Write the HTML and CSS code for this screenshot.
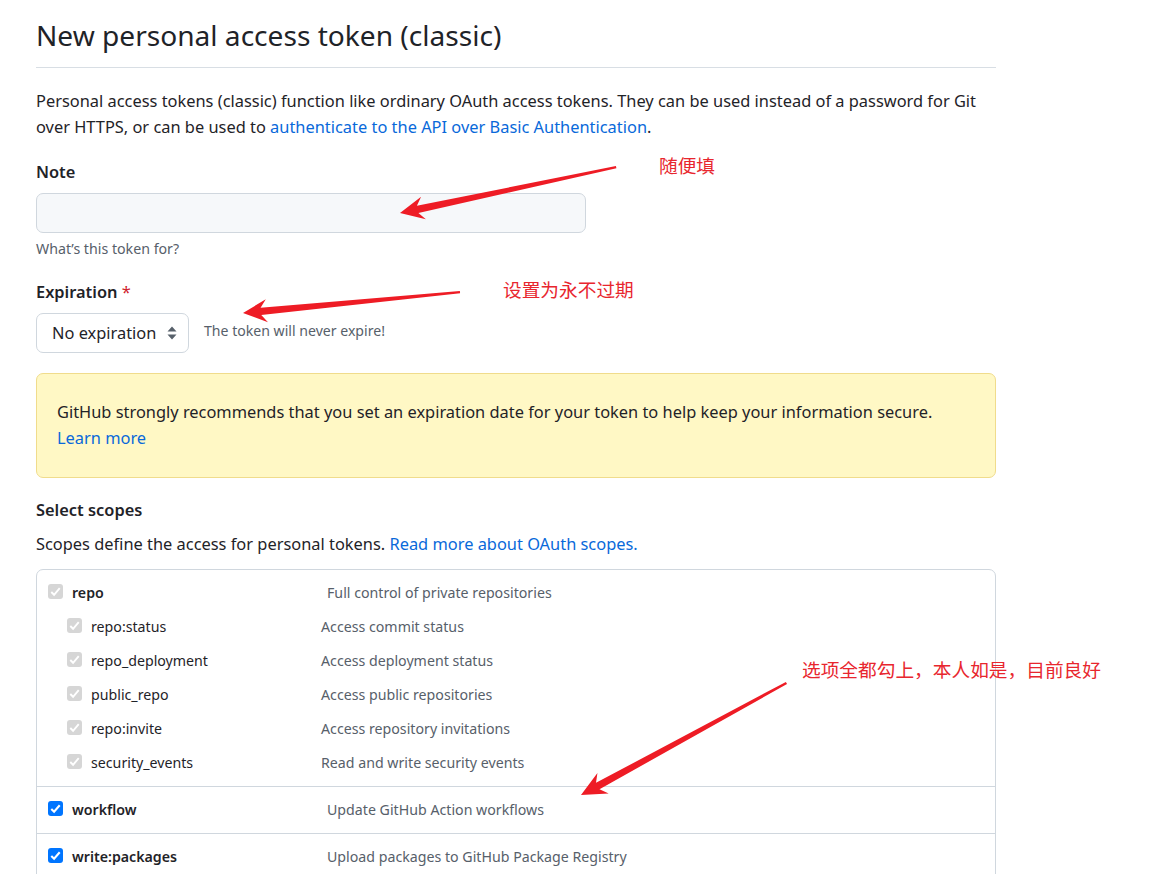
FILE: index.html
```html
<!DOCTYPE html>
<html lang="en">
<head>
<meta charset="utf-8">
<title>New personal access token (classic)</title>
<link rel="stylesheet" href="styles.css">
</head>
<body>
<div class="page">
  <h1 class="title">New personal access token (classic)</h1>
  <p class="intro">Personal access tokens (classic) function like ordinary OAuth access tokens. They can be used instead of a password for Git over HTTPS, or can be used to <a class="link" href="#">authenticate to the API over Basic Authentication</a>.</p>

  <div class="field">
    <label class="label">Note</label>
    <div class="input"></div>
    <div class="hint">What’s this token for?</div>
  </div>

  <div class="field field-exp">
    <label class="label">Expiration <span class="req">*</span></label>
    <div class="exp-row">
      <div class="select">
        <span>No expiration</span>
        <svg class="updown" width="10" height="16" viewBox="0 0 10 16"><path d="M5 1.5 L9.5 6.5 H0.5 Z M5 14.5 L9.5 9.5 H0.5 Z" fill="#57606a"/></svg>
      </div>
      <span class="exp-note">The token will never expire!</span>
    </div>
  </div>

  <div class="flash">
    GitHub strongly recommends that you set an expiration date for your token to help keep your information secure.<br>
    <a class="link" href="#">Learn more</a>
  </div>

  <div class="label scopes-title">Select scopes</div>
  <p class="scopes-desc">Scopes define the access for personal tokens. <a class="link" href="#">Read more about OAuth scopes.</a></p>

  <div class="scopes">
    <div class="group">
      <div class="row">
        <span class="cb cb-dis"><svg viewBox="0 0 16 16"><path d="M3.5 8.5 L6.5 11.5 L12.5 4.5" fill="none" stroke="#fff" stroke-width="2"/></svg></span>
        <span class="name strong">repo</span>
        <span class="desc">Full control of private repositories</span>
      </div>
      <div class="row sub">
        <span class="cb cb-dis"><svg viewBox="0 0 16 16"><path d="M3.5 8.5 L6.5 11.5 L12.5 4.5" fill="none" stroke="#fff" stroke-width="2"/></svg></span>
        <span class="name">repo:status</span>
        <span class="desc">Access commit status</span>
      </div>
      <div class="row sub">
        <span class="cb cb-dis"><svg viewBox="0 0 16 16"><path d="M3.5 8.5 L6.5 11.5 L12.5 4.5" fill="none" stroke="#fff" stroke-width="2"/></svg></span>
        <span class="name">repo_deployment</span>
        <span class="desc">Access deployment status</span>
      </div>
      <div class="row sub">
        <span class="cb cb-dis"><svg viewBox="0 0 16 16"><path d="M3.5 8.5 L6.5 11.5 L12.5 4.5" fill="none" stroke="#fff" stroke-width="2"/></svg></span>
        <span class="name">public_repo</span>
        <span class="desc">Access public repositories</span>
      </div>
      <div class="row sub">
        <span class="cb cb-dis"><svg viewBox="0 0 16 16"><path d="M3.5 8.5 L6.5 11.5 L12.5 4.5" fill="none" stroke="#fff" stroke-width="2"/></svg></span>
        <span class="name">repo:invite</span>
        <span class="desc">Access repository invitations</span>
      </div>
      <div class="row sub">
        <span class="cb cb-dis"><svg viewBox="0 0 16 16"><path d="M3.5 8.5 L6.5 11.5 L12.5 4.5" fill="none" stroke="#fff" stroke-width="2"/></svg></span>
        <span class="name">security_events</span>
        <span class="desc">Read and write security events</span>
      </div>
    </div>
    <div class="group">
      <div class="row">
        <span class="cb cb-on"><svg viewBox="0 0 16 16"><path d="M3.5 8.5 L6.5 11.5 L12.5 4.5" fill="none" stroke="#fff" stroke-width="2.2"/></svg></span>
        <span class="name strong">workflow</span>
        <span class="desc">Update GitHub Action workflows</span>
      </div>
    </div>
    <div class="group">
      <div class="row">
        <span class="cb cb-on"><svg viewBox="0 0 16 16"><path d="M3.5 8.5 L6.5 11.5 L12.5 4.5" fill="none" stroke="#fff" stroke-width="2.2"/></svg></span>
        <span class="name strong">write:packages</span>
        <span class="desc">Upload packages to GitHub Package Registry</span>
      </div>
    </div>
  </div>
</div>

<svg class="arrows" width="1160" height="874" viewBox="0 0 1160 874">
  <g fill="#ee1c25">
    <path transform="translate(400 213) rotate(-12.0)" d="M0 0 L24 -11.5 L18 -3.5 L221 -1.2 L221 1.2 L18 3.8 L24 11.5 Z"/>
    <path transform="translate(243 313) rotate(-5.5)" d="M0 0 L24 -11.5 L18 -3.5 L218 -1.2 L218 1.2 L18 3.8 L24 11.5 Z"/>
    <path transform="translate(581 795) rotate(-28.6)" d="M0 0 L25 -11.5 L19 -3.5 L234 -1.2 L234 1.2 L19 3.8 L25 12 Z"/>
  </g>
</svg>
<span class="note-cn n1">随便填</span>
<span class="note-cn n2">设置为永不过期</span>
<span class="note-cn n3">选项全都勾上，本人如是，目前良好</span>
</body>
</html>
```
FILE: styles.css
```css
html, body {
  margin: 0;
  padding: 0;
  background: #ffffff;
}
body {
  font-family: "Noto Sans", "Open Sans", sans-serif;
  font-size: 16.4px;
  line-height: 26px;
  color: #1f2328;
  position: relative;
  width: 1160px;
  height: 874px;
  overflow: hidden;
}
.page {
  width: 960px;
  padding-left: 36px;
}
.title {
  margin: 0;
  padding: 17px 0 12px;
  font-size: 28.1px;
  line-height: 37.5px;
  font-weight: 400;
  border-bottom: 1px solid #d8dee4;
}
.intro {
  margin: 20px 0 0;
}
.link {
  color: #0969da;
  text-decoration: none;
}
.field {
  margin-top: 19px;
}
.field-exp {
  margin-top: 20px;
}
.label {
  display: block;
  font-weight: 600;
}
.req {
  color: #cf222e;
  font-weight: 400;
}
.input {
  margin-top: 8px;
  width: 548px;
  height: 38px;
  background: #f6f8fa;
  border: 1px solid #d0d7de;
  border-radius: 7px;
}
.hint {
  margin-top: 6px;
  font-size: 14.2px;
  line-height: 20px;
  color: #57606a;
}
.exp-row {
  margin-top: 8px;
  display: flex;
  align-items: center;
  gap: 15px;
}
.select {
  box-sizing: border-box;
  width: 153px;
  height: 40px;
  border: 1px solid #d0d7de;
  border-radius: 7px;
  background: #ffffff;
  display: flex;
  align-items: center;
  justify-content: space-between;
  padding: 0 11px 0 15px;
}
.updown {
  display: block;
}
.exp-note {
  font-size: 14.1px;
  line-height: 20px;
  color: #57606a;
  margin-top: -3px;
}
.flash {
  margin-top: 20px;
  box-sizing: border-box;
  width: 960px;
  padding: 25px 20px 26px;
  background: #fff8c5;
  border: 1px solid #f0dc8c;
  border-radius: 7px;
}
.scopes-title {
  margin-top: 19px;
}
.scopes-desc {
  margin: 8px 0 0;
}
.scopes {
  margin-top: 12px;
  box-sizing: border-box;
  width: 960px;
  border: 1px solid #d0d7de;
  border-radius: 7px;
}
.group {
  padding: 6px 0;
  border-top: 1px solid #d0d7de;
}
.group:first-child {
  border-top: 0;
}
.row {
  height: 34px;
  display: flex;
  align-items: center;
  padding-left: 11px;
  font-size: 14.2px;
}
.row.sub {
  padding-left: 30px;
}
.cb {
  box-sizing: border-box;
  width: 15px;
  height: 15px;
  border-radius: 3px;
  flex: none;
  margin-top: -3px;
}
.cb svg {
  display: block;
  width: 15px;
  height: 15px;
}
.cb-dis {
  background: #d6d6d6;
}
.cb-on {
  background: #0075ff;
}
.name {
  margin-left: 9px;
  width: 255px;
  flex: none;
}
.row.sub .name {
  width: 230px;
}
.strong {
  font-weight: 600;
}
.desc {
  color: #57606a;
}
.arrows {
  position: absolute;
  left: 0;
  top: 0;
  pointer-events: none;
}
.note-cn {
  position: absolute;
  font-family: "Noto Sans CJK SC", sans-serif;
  font-size: 18.7px;
  line-height: 24px;
  color: #e8262e;
  white-space: nowrap;
}
.n1 { left: 659px; top: 153px; }
.n2 { left: 503px; top: 277px; }
.n3 { left: 802px; top: 657px; }
```
